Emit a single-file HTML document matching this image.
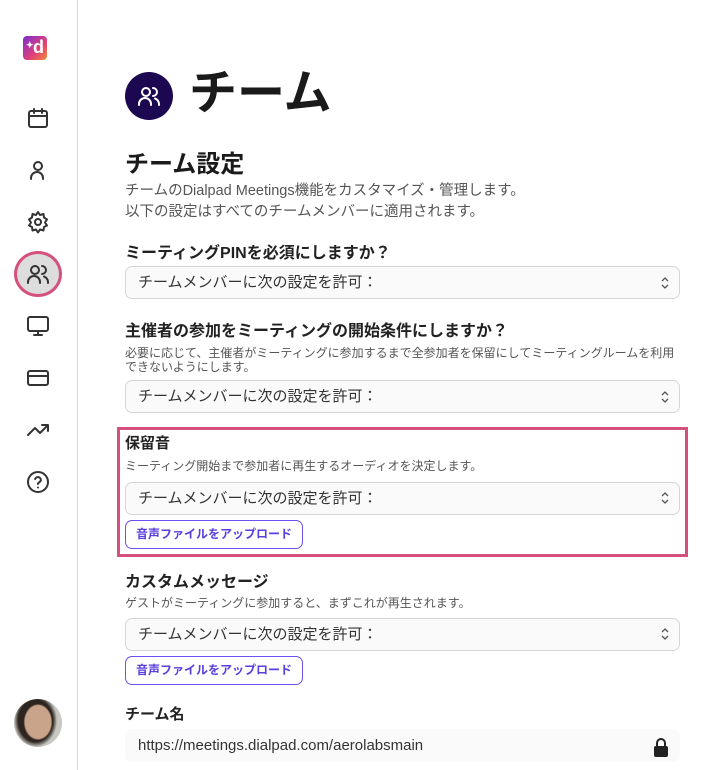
<!DOCTYPE html>
<html><head><meta charset="utf-8"><style>
*{box-sizing:border-box;margin:0;padding:0}
body{width:709px;height:770px;overflow:hidden;background:#fff;font-family:"Liberation Sans","Noto Sans CJK JP",sans-serif;color:#222;position:relative}
.side{position:absolute;left:0;top:0;width:78px;height:770px;border-right:1px solid #d8d8d8}
.ic{position:absolute;left:26px;width:24px;height:24px}
.abs{position:absolute}
.lbl{position:absolute;left:125px;font-size:16px;font-weight:bold;color:#222;white-space:nowrap}
.desc{position:absolute;left:125px;font-size:12px;color:#555;line-height:14px;white-space:nowrap}
.sel{position:absolute;left:125px;width:555px;height:33px;border:1px solid #d6d6d6;border-radius:7px;background:#fafafa;font-size:15px;color:#333;padding:6px 12px;line-height:20px}
.btn{position:absolute;left:125px;width:178px;height:29px;border:1px solid #6b4ff0;border-radius:7px;color:#5a3fe0;font-size:12px;font-weight:bold;text-align:center;line-height:27px}
</style></head><body>
<div class="side">
<div class="abs" style="left:23px;top:36px;width:24px;height:24px;border-radius:4px;background:linear-gradient(135deg,#7a2fd0,#e0407a 60%,#f08a30);color:#fff;font-weight:bold;font-size:18px;line-height:22px;text-align:right;padding-right:3px">d<span style="position:absolute;left:3px;top:-2px;font-size:9px">✦</span></div>
<svg class="ic" style="top:106px" viewBox="0 0 24 24" fill="none" stroke="#333" stroke-width="2" stroke-linecap="round"><rect x="3" y="5" width="18" height="16" rx="2"/><path d="M3 10h18M8 3v4M16 3v4"/></svg>
<svg class="ic" style="top:158px" viewBox="0 0 24 24" fill="none" stroke="#333" stroke-width="2" stroke-linecap="round"><circle cx="12" cy="8" r="4"/><path d="M5 21v-1a6 6 0 0 1 12 0v1"/></svg>
<svg class="ic" style="top:210px" viewBox="0 0 24 24" fill="none" stroke="#333" stroke-width="2"><circle cx="12" cy="12" r="3"/><path d="M12 2l2 3 3.5-1 .5 3.5 3 2-2 3 2 3-3 1.5-.5 3.5-3.5-1-2 3-2-3-3.5 1-.5-3.5-3-1.5 2-3-2-3 3-2 .5-3.5 3.5 1z" stroke-linejoin="round"/></svg>
<div class="abs" style="left:14px;top:251px;width:48px;height:46px;border-radius:50%;background:#ddd;border:3px solid #d4507e"></div>
<svg class="ic" style="top:262px" viewBox="0 0 24 24" fill="none" stroke="#333" stroke-width="2" stroke-linecap="round"><circle cx="9" cy="8" r="4"/><path d="M2 21v-1a6 6 0 0 1 12 0v1M16 4a4 4 0 0 1 0 8M22 21v-1a6 6 0 0 0-4-5.5"/></svg>
<svg class="ic" style="top:314px" viewBox="0 0 24 24" fill="none" stroke="#333" stroke-width="2" stroke-linecap="round"><rect x="2" y="3" width="20" height="14" rx="2"/><path d="M8 21h8M12 17v4"/></svg>
<svg class="ic" style="top:366px" viewBox="0 0 24 24" fill="none" stroke="#333" stroke-width="2"><rect x="2" y="5" width="20" height="14" rx="2"/><path d="M2 10h20"/></svg>
<svg class="ic" style="top:418px" viewBox="0 0 24 24" fill="none" stroke="#333" stroke-width="2" stroke-linecap="round" stroke-linejoin="round"><path d="M2 17l7-7 5 5 8-8M16 7h6v6"/></svg>
<svg class="ic" style="top:470px" viewBox="0 0 24 24" fill="none" stroke="#333" stroke-width="2" stroke-linecap="round"><circle cx="12" cy="12" r="10"/><path d="M9.1 9a3 3 0 0 1 5.8 1c0 2-3 2.5-3 4M12 17.5h.01"/></svg>
<div class="abs" style="left:14px;top:699px;width:48px;height:48px;border-radius:50%;background:radial-gradient(ellipse 30% 38% at 50% 48%,#c9a48a 0 90%,transparent 100%),radial-gradient(ellipse 45% 55% at 45% 45%,#2e2420 0 80%,transparent 100%),#c8c8c2"></div>
</div>

<div class="abs" style="left:125px;top:72px;width:48px;height:48px;border-radius:50%;background:#1c0850"></div>
<svg class="abs" style="left:137px;top:84px" width="24" height="24" viewBox="0 0 24 24" fill="none" stroke="#fff" stroke-width="2" stroke-linecap="round"><circle cx="9" cy="8" r="4"/><path d="M2 21v-1a6 6 0 0 1 12 0v1M16 4a4 4 0 0 1 0 8M22 21v-1a6 6 0 0 0-4-5.5"/></svg>
<div class="abs" style="left:189px;top:64px;font-size:48px;font-weight:bold;line-height:60px;color:#1a1a1a">チーム</div>
<div class="abs" style="left:125px;top:149px;font-size:24px;font-weight:bold;line-height:32px;color:#1a1a1a">チーム設定</div>
<div class="abs" style="left:125px;top:181px;font-size:14.5px;color:#555;line-height:21px">チームのDialpad Meetings機能をカスタマイズ・管理します。<br>以下の設定はすべてのチームメンバーに適用されます。</div>

<div class="lbl" style="top:239px">ミーティングPINを必須にしますか？</div>
<div class="sel" style="top:266px">チームメンバーに次の設定を許可：</div>

<div class="lbl" style="top:317px">主催者の参加をミーティングの開始条件にしますか？</div>
<div class="desc" style="top:346px">必要に応じて、主催者がミーティングに参加するまで全参加者を保留にしてミーティングルームを利用<br>できないようにします。</div>
<div class="sel" style="top:380px">チームメンバーに次の設定を許可：</div>

<div class="abs" style="left:117px;top:427px;width:571px;height:130px;border:3px solid #d4507e"></div>
<div class="lbl" style="top:432px;font-size:15px">保留音</div>
<div class="desc" style="top:459px">ミーティング開始まで参加者に再生するオーディオを決定します。</div>
<div class="sel" style="top:482px">チームメンバーに次の設定を許可：</div>
<div class="btn" style="top:520px">音声ファイルをアップロード</div>

<div class="lbl" style="top:568px">カスタムメッセージ</div>
<div class="desc" style="top:596px">ゲストがミーティングに参加すると、まずこれが再生されます。</div>
<div class="sel" style="top:618px">チームメンバーに次の設定を許可：</div>
<div class="btn" style="top:656px">音声ファイルをアップロード</div>

<div class="lbl" style="top:703px;font-size:15px">チーム名</div>
<div class="sel" style="top:729px;border-color:#fafafa;font-size:15px">https://meetings.dialpad.com/aerolabsmain</div>
<svg class="abs" style="left:653px;top:737px" width="16" height="20" viewBox="0 0 16 20"><path d="M4 9V6a4 4 0 0 1 8 0v3" fill="none" stroke="#222" stroke-width="2"/><rect x="1" y="9" width="14" height="11" rx="2" fill="#222"/></svg>
<svg class="abs" style="left:660px;top:276px" width="10" height="14" viewBox="0 0 10 14" fill="none" stroke="#555" stroke-width="1.3"><path d="M2 5l3-3 3 3M2 9l3 3 3-3"/></svg>
<svg class="abs" style="left:660px;top:390px" width="10" height="14" viewBox="0 0 10 14" fill="none" stroke="#555" stroke-width="1.3"><path d="M2 5l3-3 3 3M2 9l3 3 3-3"/></svg>
<svg class="abs" style="left:660px;top:491px" width="10" height="14" viewBox="0 0 10 14" fill="none" stroke="#555" stroke-width="1.3"><path d="M2 5l3-3 3 3M2 9l3 3 3-3"/></svg>
<svg class="abs" style="left:660px;top:627px" width="10" height="14" viewBox="0 0 10 14" fill="none" stroke="#555" stroke-width="1.3"><path d="M2 5l3-3 3 3M2 9l3 3 3-3"/></svg>
</body></html>
